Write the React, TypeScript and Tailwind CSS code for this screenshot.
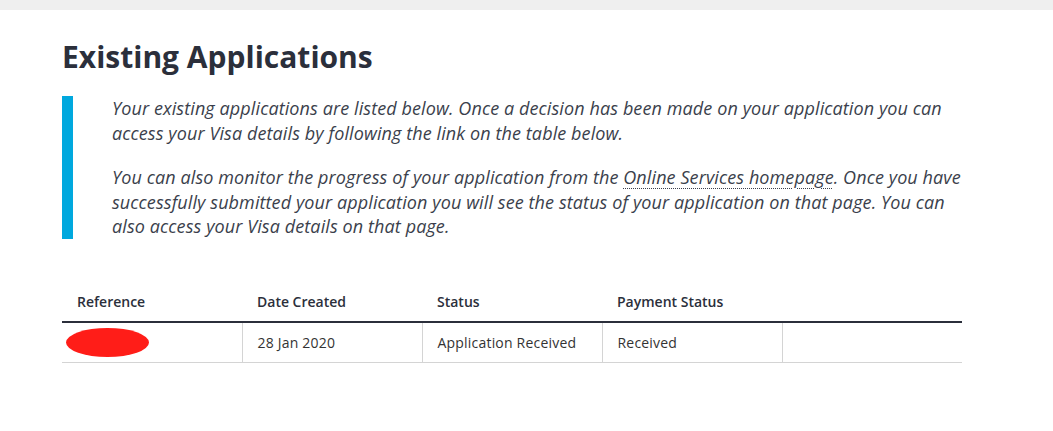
import React from 'react';

interface ApplicationRow {
  reference: string;
  dateCreated: string;
  status: string;
  paymentStatus: string;
}

const rows: ApplicationRow[] = [
  {
    reference: '',
    dateCreated: '28 Jan 2020',
    status: 'Application Received',
    paymentStatus: 'Received',
  },
];

const headers = ['Reference', 'Date Created', 'Status', 'Payment Status', ''];

const App: React.FC = () => {
  return (
    <div className="min-h-[431px] bg-white font-['Open_Sans',sans-serif] text-[#2b2f3b]">
      <div className="h-[10px] bg-[#efefef]" />

      <div className="w-[900px] ml-[62px] pt-[30px]">
        <h1 className="text-[30px] leading-[34px] font-bold text-[#2b2f3b]">
          Existing Applications
        </h1>

        <div className="mt-[22px] border-l-[11px] border-[#00a8de] pl-[39px] text-[18px] leading-[24.5px] tracking-[0.1px] italic font-[370] text-[#3b3f4c]">
          <p>
            Your existing applications are listed below. Once a decision has been made on your application you can
            access your Visa details by following the link on the table below.
          </p>
          <p className="mt-[20px]">
            You can also monitor the progress of your application from the{' '}
            <a href="#" className="underline decoration-dotted decoration-1 underline-offset-[4px]">
              Online Services homepage
            </a>
            . Once you have successfully submitted your application you will see the status of your application on
            that page. You can also access your Visa details on that page.
          </p>
        </div>

        <table className="mt-[43px] w-[900px] table-fixed border-collapse text-[14px]">
          <thead>
            <tr className="border-b-2 border-[#2b2f3b]">
              {headers.map((h, i) => (
                <th key={i} className="w-[180px] h-[40px] px-[15px] text-left font-semibold text-[#2b2f3b]">
                  {h}
                </th>
              ))}
            </tr>
          </thead>
          <tbody className="tracking-[0.2px]">
            {rows.map((row, i) => (
              <tr key={i} className="border-b border-[#d4d4d4]">
                <td className="h-[41px] px-[4px]">
                  <div className="w-[83px] h-[29px] rounded-[50%] bg-[#ff1d18] blur-[0.6px]" />
                </td>
                <td className="h-[41px] px-[15px] border-l border-[#d4d4d4] text-[#333]">{row.dateCreated}</td>
                <td className="h-[41px] px-[15px] border-l border-[#d4d4d4] text-[#333]">{row.status}</td>
                <td className="h-[41px] px-[15px] border-l border-[#d4d4d4] text-[#333]">{row.paymentStatus}</td>
                <td className="h-[41px] px-[15px] border-l border-[#d4d4d4]" />
              </tr>
            ))}
          </tbody>
        </table>
      </div>
    </div>
  );
};

export default App;
